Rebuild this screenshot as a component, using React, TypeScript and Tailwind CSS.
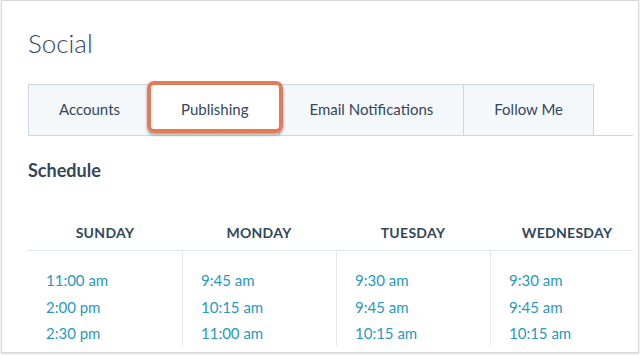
import React from 'react';

const tabs = ['Accounts', 'Publishing', 'Email Notifications', 'Follow Me'];

const days = [
  { name: 'SUNDAY', times: ['11:00 am', '2:00 pm', '2:30 pm'] },
  { name: 'MONDAY', times: ['9:45 am', '10:15 am', '11:00 am'] },
  { name: 'TUESDAY', times: ['9:30 am', '9:45 am', '10:15 am'] },
  { name: 'WEDNESDAY', times: ['9:30 am', '9:45 am', '10:15 am'] },
];

export default function App() {
  return (
    <div className="w-[640px] h-[355px] bg-white overflow-hidden" style={{ fontFamily: 'Lato, "Open Sans", sans-serif' }}>
      <div className="ml-px w-[638px] h-[353px] border border-[#d8d8d8] shadow-[0_1px_2px_rgba(0,0,0,0.15)] bg-white pl-[26px] pr-[5px] overflow-hidden text-[#33475b]">
        <h1 className="mt-[26px] text-[26px] leading-[32px] font-light">Social</h1>

        <div className="relative mt-[25px] flex border-b border-[#cbd6e2]">
          {tabs.map((t, i) => {
            const active = i === 1;
            return (
              <div
                key={t}
                className={
                  'h-[51px] px-[30px] flex items-center text-[15px] border-t border-l border-[#cbd6e2] ' +
                  (active ? 'bg-white -mb-px' : 'bg-[#f5f8fa]') +
                  (i === tabs.length - 1 ? ' border-r' : '')
                }
              >
                <span className="-mt-[2px]">{t}</span>
              </div>
            );
          })}
          <div className="absolute left-[119px] top-[-3px] w-[136px] h-[52px] border-[4px] border-[#e27b58] rounded-[7px] shadow-[0_2px_3px_rgba(0,0,0,0.35)]" />
        </div>

        <h2 className="mt-[22px] text-[18px] leading-[24px] font-bold">Schedule</h2>

        <div className="mt-[41px] flex overflow-hidden">
          {days.map((d, i) => (
            <div key={d.name} className="w-[154px] shrink-0">
              <div className="h-[28px] border-b border-[#dfe3eb] text-center text-[14px] font-bold tracking-[0.3px] leading-[20px]">
                {d.name}
              </div>
              <div className={'pt-[16px] pl-[18px] h-[95px] ' + (i > 0 ? 'border-l border-[#e5e8ed]' : '')}>
                {d.times.map((t) => (
                  <div key={t} className="text-[15px] leading-[26.5px] text-[#2799c0]">
                    {t}
                  </div>
                ))}
              </div>
            </div>
          ))}
        </div>
      </div>
    </div>
  );
}
